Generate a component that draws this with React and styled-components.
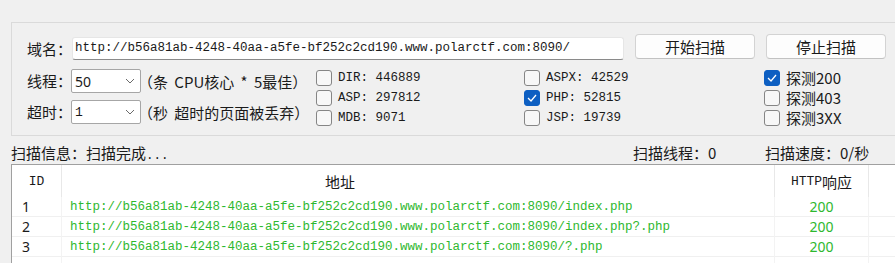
import React from "react";
import styled, { createGlobalStyle } from "styled-components";

const Global = createGlobalStyle`
  html, body { margin: 0; padding: 0; background: #f0f0f0; }
  body {
    font-family: "Noto Sans CJK SC", "Noto Sans", sans-serif;
    color: #1a1a1a;
    overflow: hidden;
  }
  * { box-sizing: border-box; }
`;

const CJK = `"Noto Sans CJK SC", "Noto Sans", sans-serif`;
const MONO = `"Liberation Mono", "Noto Sans CJK SC", monospace`;
const GREEN = "#2fb82f";

const Window = styled.div`
  width: 895px;
  height: 263px;
  overflow: hidden;
  padding: 22px 0 0 11px;
  background: #f0f0f0;
`;

const GroupBox = styled.div`
  height: 114px;
  margin-right: -30px;
  border: 1px solid #dadada;
  padding: 11px 0 0 15px;
`;

const TopRow = styled.div`
  display: flex;
  align-items: flex-start;
`;

const Label = styled.span`
  font-family: ${CJK};
  font-size: 15px;
  line-height: ${(p) => p.$lh || 24}px;
  width: 45px;
  flex: none;
  margin-top: ${(p) => p.$mt || 0}px;
  white-space: nowrap;
`;

const UrlInput = styled.div`
  width: 552px;
  height: 23px;
  margin-top: 3px;
  background: #fff;
  border: 1px solid #e6e6e6;
  border-bottom: 1px solid #8a8a8a;
  border-radius: 3px;
  padding: 0 2px;
  font-family: ${MONO};
  font-size: 12.5px;
  line-height: 21px;
  white-space: nowrap;
  overflow: hidden;
`;

const Button = styled.button`
  width: 120px;
  height: 25px;
  margin-left: ${(p) => p.$ml}px;
  background: #fdfdfd;
  border: 1px solid #d3d3d3;
  border-bottom-color: #c2c2c2;
  border-radius: 4px;
  font-family: ${CJK};
  font-size: 15px;
  line-height: 22px;
  color: #1a1a1a;
  padding: 0;
`;

const OptionsArea = styled.div`
  display: flex;
  margin-top: 9px;
`;

const LeftCol = styled.div`
  width: 289px;
  flex: none;
  display: flex;
  flex-direction: column;
  gap: 7px;
`;

const FieldRow = styled.div`
  display: flex;
  align-items: center;
  height: 24px;
`;

const Combo = styled.div`
  width: 70px;
  height: 24px;
  margin-left: -1px;
  background: #fff;
  border: 1px solid #a6a6a6;
  border-radius: 2px;
  display: flex;
  align-items: center;
  justify-content: space-between;
  padding: 0 5px 0 3px;
  font-family: ${(p) => (p.$serif ? MONO : `"Noto Sans", sans-serif`)};
  font-size: ${(p) => (p.$serif ? 13 : 14)}px;
`;

const Hint = styled.span`
  margin-left: -3px;
  font-family: ${CJK};
  font-size: 15px;
  white-space: nowrap;
  word-spacing: ${(p) => p.$ws || 0}px;
`;

const CheckGrid = styled.div`
  margin-top: -1px;
  display: grid;
  grid-template-columns: 208px 240px auto;
  grid-template-rows: repeat(3, 20px);
  grid-auto-flow: column;
`;

const CheckItem = styled.label`
  display: flex;
  align-items: center;
  gap: 6px;
  white-space: nowrap;
`;

const Box = styled.span`
  width: 16px;
  height: 16px;
  border-radius: 3px;
  flex: none;
  border: 1px solid ${(p) => (p.$on ? "#0d5fc2" : "#858585")};
  background: ${(p) => (p.$on ? "#0d5fc2" : "#f7f7f7")};
  display: flex;
  align-items: center;
  justify-content: center;
`;

const CheckText = styled.span`
  font-family: ${(p) => (p.$cjk ? CJK : MONO)};
  font-size: ${(p) => (p.$cjk ? 15 : 12.5)}px;
  line-height: 20px;
`;

const StatusBar = styled.div`
  display: flex;
  height: 28px;
  padding-top: 7px;
  font-family: ${CJK};
  font-size: 15px;
  line-height: 20px;
`;

const StatusMain = styled.span`
  flex: 1;
`;

const Dots = styled.span`
  font-family: ${MONO};
  font-size: 12.5px;
`;

const StatusItem = styled.span`
  width: ${(p) => p.$w}px;
  flex: none;
  white-space: nowrap;
`;

const Table = styled.div`
  background: #fff;
  border-top: 1px solid #a0a0a0;
  border-left: 1px solid #a0a0a0;
  margin-right: -20px;
  height: 120px;
  display: grid;
  grid-template-columns: 50px 713px 94px 1fr;
  grid-auto-rows: 20px;
  grid-template-rows: 32px;
`;

const HeadCell = styled.div`
  height: 32px;
  border-right: 1px solid #e8e8e8;
  display: flex;
  align-items: center;
  justify-content: ${(p) => p.$align || "center"};
  padding-left: ${(p) => p.$pl || 0}px;
  font-family: ${(p) => (p.$mono ? MONO : CJK)};
  font-size: ${(p) => (p.$mono ? 13 : 15)}px;
  white-space: nowrap;
`;

const HeadCjk = styled.span`
  font-family: ${CJK};
  font-size: 15px;
`;

const Cell = styled.div`
  height: 20px;
  border-bottom: 1px solid #f0f0f0;
  border-right: 1px solid #f3f3f3;
  display: flex;
  align-items: center;
  justify-content: ${(p) => p.$align || "flex-start"};
  padding-left: ${(p) => p.$pl || 0}px;
  font-family: ${(p) => (p.$mono ? MONO : `"Noto Sans", sans-serif`)};
  font-size: ${(p) => (p.$mono ? 12.5 : 14)}px;
  color: ${(p) => p.$color || "#1a1a1a"};
  white-space: nowrap;
  overflow: hidden;
`;

const Chevron = () => (
  <svg width="10" height="6" viewBox="0 0 10 6">
    <path d="M1 1 L5 5 L9 1" fill="none" stroke="#6a6a6a" strokeWidth="1" />
  </svg>
);

const Tick = () => (
  <svg width="10" height="8" viewBox="0 0 10 8">
    <path d="M1 4 L4 7 L9 1" fill="none" stroke="#fff" strokeWidth="1.3" />
  </svg>
);

const Check = ({ on, cjk, children }) => (
  <CheckItem>
    <Box $on={on}>{on && <Tick />}</Box>
    <CheckText $cjk={cjk}>{children}</CheckText>
  </CheckItem>
);

const BASE = "http://b56a81ab-4248-40aa-a5fe-bf252c2cd190.www.polarctf.com:8090/";
const rows = [
  { id: 1, url: BASE + "index.php", code: 200 },
  { id: 2, url: BASE + "index.php?.php", code: 200 },
  { id: 3, url: BASE + "?.php", code: 200 },
  { id: "", url: "", code: "" },
];

export default function App() {
  return (
    <>
      <Global />
      <Window>
        <GroupBox>
          <TopRow>
            <Label $mt={3} $lh={23}>域名：</Label>
            <UrlInput>{BASE}</UrlInput>
            <Button $ml={11}>开始扫描</Button>
            <Button $ml={11}>停止扫描</Button>
          </TopRow>
          <OptionsArea>
            <LeftCol>
              <FieldRow>
                <Label>线程：</Label>
                <Combo>
                  <span>50</span>
                  <Chevron />
                </Combo>
                <Hint $ws={3}>（条 CPU核心 * 5最佳）</Hint>
              </FieldRow>
              <FieldRow>
                <Label>超时：</Label>
                <Combo $serif>
                  <span>1</span>
                  <Chevron />
                </Combo>
                <Hint $ws={3}>（秒 超时的页面被丢弃）</Hint>
              </FieldRow>
            </LeftCol>
            <CheckGrid>
              <Check>DIR: 446889</Check>
              <Check>ASP: 297812</Check>
              <Check>MDB: 9071</Check>
              <Check>ASPX: 42529</Check>
              <Check on>PHP: 52815</Check>
              <Check>JSP: 19739</Check>
              <Check on cjk>探测200</Check>
              <Check cjk>探测403</Check>
              <Check cjk>探测3XX</Check>
            </CheckGrid>
          </OptionsArea>
        </GroupBox>
        <StatusBar>
          <StatusMain>扫描信息：扫描完成<Dots>...</Dots></StatusMain>
          <StatusItem $w={132}>扫描线程：0</StatusItem>
          <StatusItem $w={130}>扫描速度：0/秒</StatusItem>
        </StatusBar>
        <Table>
          <HeadCell $mono>ID</HeadCell>
          <HeadCell $align="flex-start" $pl={263}>地址</HeadCell>
          <HeadCell $mono>
            HTTP<HeadCjk>响应</HeadCjk>
          </HeadCell>
          <HeadCell />
          {rows.map((r, i) => (
            <React.Fragment key={i}>
              <Cell $pl={10}>{r.id}</Cell>
              <Cell $mono $pl={8} $color={GREEN}>{r.url}</Cell>
              <Cell $align="center" $color={GREEN}>{r.code}</Cell>
              <Cell />
            </React.Fragment>
          ))}
        </Table>
      </Window>
    </>
  );
}
